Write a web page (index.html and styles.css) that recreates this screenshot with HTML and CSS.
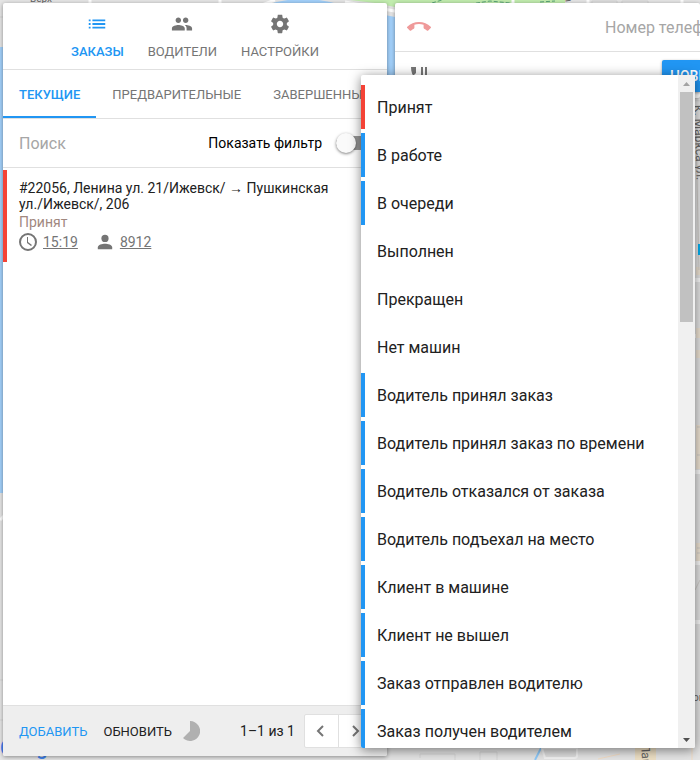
FILE: index.html
```html
<!DOCTYPE html>
<html lang="ru">
<head>
  <meta charset="UTF-8" />
  <meta name="viewport" content="width=device-width, initial-scale=1.0"/>
  <title>Заказы</title>
  <link rel="stylesheet" href="styles.css">
</head>
<body>
  <!-- Map -->
  <svg class="map" viewBox="0 0 700 760" preserveAspectRatio="xMinYMin slice" aria-hidden="true">
    <rect width="700" height="760" fill="#e5e5e5"/>
    <path d="M0 47H10V493H0z" fill="#a3d1fb"/>
    <path d="M262 6Q303-8 345 6z" fill="#a3d1fb"/>
    <path d="M350 0H565V3H535L500 8H395V7L375 3z" fill="#c1ecae"/>
    <path d="M380 14L400 18V110H380z" fill="#a3d1fb"/>
    <path d="M432 3L442 0M470 4L490 1 510 3M540 2L555 1" fill="none" stroke="#5aa578" stroke-dasharray="4 2"/>
    <path d="M90 0V5M220 0V5M262 5L275 0M345 2L400 12M513 0V6M588 0V6M682 0V5M0 520L6 514" fill="none" stroke="#fff" stroke-width="3"/>
    <path d="M592 5V1H617V5M622 5V1H648V5M0 17H5" fill="none" stroke="#d3d3d3"/>
    <path d="M690 98H700M690 280H700M690 336H700M690 472H700M690 563H700M690 622H700" stroke="#fafafa" stroke-width="4"/>
    <path d="M696 275h6v-8h-6zM696 328h6v10h-6zM696 350h6v8h-6zM696 425h6v44h-6zM696 543h6v18h-6z" fill="#efe4d4"/>
    <path d="M696 130L699 270M697 427H700M697 455H700M697 548H700M697 553H700M695 590L700 580" stroke="#d0cdc9"/>
    <path d="M698 244h3v11h-3z" fill="#00aeef"/>
    <path d="M420 758V754H455V760M480 760V752H497V760M0 680H3M0 720H3" fill="none" stroke="#d5d5d5"/>
    <path d="M535 760L541 748" stroke="#8fcafa" stroke-width="2"/>
    <path d="M542 748H577V756Q577 758 574 758H545z" fill="#dedede" stroke="#f2f2f2" stroke-width="2"/>
    <path d="M635 740H656V760H635z" fill="#eee0c5"/>
    <path d="M598 759L620 754M692 745V760" fill="none" stroke="#f3ddc5"/>
    <text class="map-label" x="30" y="2">Верх</text>
    <text class="map-label" transform="translate(564 -8) rotate(82)">ул.</text>
    <text class="map-label street" transform="translate(694 105) rotate(88)">К. Маркса ул.</text>
    <text class="map-label street" transform="translate(641 744) rotate(86)">Пан</text>
    <text class="map-label" x="693" y="701">ой</text>
    <text class="map-logo" x="0" y="755"><tspan fill="#4285f4">G</tspan><tspan fill="#ea4335">o</tspan><tspan fill="#fbbc05">o</tspan><tspan fill="#4285f4">g</tspan><tspan fill="#34a853">l</tspan><tspan fill="#ea4335">e</tspan></text>
  </svg>

  <div class="workspace">
    <section class="panel orders">
      <nav class="main-nav">
        <a href="#orders" class="nav-item active">
          <svg class="icon" viewBox="0 0 24 24"><path d="M3 13h2v-2H3v2zm0 4h2v-2H3v2zm0-8h2V7H3v2zm4 4h14v-2H7v2zm0 4h14v-2H7v2zM7 7v2h14V7H7z"/></svg>
          <span>ЗАКАЗЫ</span>
        </a>
        <a href="#drivers" class="nav-item">
          <svg class="icon" viewBox="0 0 24 24"><path d="M16 11c1.66 0 2.99-1.34 2.99-3S17.66 5 16 5s-3 1.34-3 3 1.34 3 3 3zm-8 0c1.66 0 2.99-1.34 2.99-3S9.66 5 8 5 5 6.34 5 8s1.34 3 3 3zm0 2c-2.33 0-7 1.17-7 3.5V19h14v-2.5c0-2.33-4.67-3.5-7-3.5zm8 0c-.29 0-.62.02-.97.05 1.16.84 1.97 1.97 1.97 3.45V19h6v-2.5c0-2.33-4.67-3.5-7-3.5z"/></svg>
          <span>ВОДИТЕЛИ</span>
        </a>
        <a href="#settings" class="nav-item">
          <svg class="icon" viewBox="0 0 24 24"><path d="M19.43 12.98c.04-.32.07-.64.07-.98s-.03-.66-.07-.98l2.11-1.65c.19-.15.24-.42.12-.64l-2-3.46c-.12-.22-.39-.3-.61-.22l-2.49 1c-.52-.4-1.08-.73-1.69-.98l-.38-2.65C14.46 2.18 14.25 2 14 2h-4c-.25 0-.46.18-.49.42l-.38 2.65c-.61.25-1.17.59-1.69.98l-2.49-1c-.23-.09-.49 0-.61.22l-2 3.46c-.13.22-.07.49.12.64l2.11 1.65c-.04.32-.07.65-.07.98s.03.66.07.98l-2.11 1.65c-.19.15-.24.42-.12.64l2 3.46c.12.22.39.3.61.22l2.49-1c.52.4 1.08.73 1.69.98l.38 2.65c.03.24.24.42.49.42h4c.25 0 .46-.18.49-.42l.38-2.65c.61-.25 1.17-.59 1.69-.98l2.49 1c.23.09.49 0 .61-.22l2-3.46c.12-.22.07-.49-.12-.64l-2.11-1.65zM12 15.5c-1.93 0-3.5-1.57-3.5-3.5s1.57-3.5 3.5-3.5 3.5 1.57 3.5 3.5-1.57 3.5-3.5 3.5z"/></svg>
          <span>НАСТРОЙКИ</span>
        </a>
      </nav>

      <div class="tabs" role="tablist">
        <button class="tab active" role="tab" aria-selected="true">ТЕКУЩИЕ</button>
        <button class="tab" role="tab">ПРЕДВАРИТЕЛЬНЫЕ</button>
        <button class="tab" role="tab">ЗАВЕРШЕННЫЕ</button>
      </div>

      <div class="search-row">
        <input type="text" class="search" placeholder="Поиск" aria-label="Поиск">
        <label class="filter" for="showFilter">Показать фильтр</label>
        <input type="checkbox" id="showFilter" class="switch">
      </div>

      <div class="order-list">
        <article class="order">
          <div class="order-title">#22056, Ленина ул. 21/Ижевск/ → Пушкинская ул./Ижевск/, 206</div>
          <div class="order-status">Принят</div>
          <div class="order-meta">
            <svg class="icon-small" viewBox="0 0 20 20"><circle cx="9" cy="10" r="8" fill="none" stroke="#757575" stroke-width="2"/><path d="M8 5h1v5l4 3-1 1-4-3z"/></svg>
            <a href="#time">15:19</a>
            <svg class="icon-small person" viewBox="0 0 20 20"><circle cx="10" cy="6" r="4"/><path d="M2 18v-2c0-3 5-4 8-4s8 1 8 4v2z"/></svg>
            <a href="#driver">8912</a>
          </div>
        </article>
      </div>

      <footer class="footer">
        <button class="text-btn primary">ДОБАВИТЬ</button>
        <button class="text-btn">ОБНОВИТЬ</button>
        <svg class="timer" viewBox="0 0 20 20"><path d="M10 0A10 10 0 1 1 3 17L10 10z"/></svg>
        <span class="range">1–1 из 1</span>
        <div class="pager">
          <button aria-label="Назад"><svg viewBox="0 0 24 24"><path d="M14 7l-5 5 5 5"/></svg></button>
          <button aria-label="Вперёд"><svg viewBox="0 0 24 24"><path d="M10 7l5 5-5 5"/></svg></button>
        </div>
      </footer>
    </section>

    <section class="panel call">
      <div class="call-row">
        <button class="hangup" aria-label="Завершить звонок">
          <svg viewBox="0 0 24 24"><path d="M12 9c-1.600 0-3.150.25-4.600.72v3.100c0 .390-.230.740-.560.900-.980.490-1.870 1.120-2.660 1.850-.180.180-.430.280-.700.280-.280 0-.530-.110-.710-.290L.290 13.080c-.180-.170-.290-.420-.290-.700 0-.280.110-.530.290-.710C3.340 8.780 7.460 7 12 7s8.660 1.780 11.710 4.670c.180.180.290.430.290.710 0 .280-.110.530-.290.710l-2.480 2.480c-.180.180-.430.290-.710.290-.270 0-.520-.110-.700-.280-.790-.740-1.690-1.360-2.670-1.850-.330-.160-.560-.500-.560-.900v-3.100C15.150 9.250 13.600 9 12 9z"/></svg>
        </button>
        <input type="tel" class="phone" placeholder="Номер телефона" aria-label="Номер телефона">
      </div>
      <div class="call-actions">
        <svg class="hold" viewBox="0 0 20 20"><path d="M2 1h5v6l-2 2c1 2 3 4 6 5l2-2 5 1v4C9 18 2 11 2 1zM12 1h2v8h-2zM16 1h2v8h-2z"/></svg>
        <button class="new-btn">НОВЫЙ</button>
      </div>
    </section>
  </div>

  <!-- Status menu -->
  <div class="menu">
    <div class="menu-items" role="listbox" aria-label="Статус">
      <button role="option" class="red">Принят</button>
      <button role="option" class="blue">В работе</button>
      <button role="option" class="blue">В очереди</button>
      <button role="option">Выполнен</button>
      <button role="option">Прекращен</button>
      <button role="option">Нет машин</button>
      <button role="option" class="blue">Водитель принял заказ</button>
      <button role="option" class="blue">Водитель принял заказ по времени</button>
      <button role="option" class="blue">Водитель отказался от заказа</button>
      <button role="option" class="blue">Водитель подъехал на место</button>
      <button role="option" class="blue">Клиент в машине</button>
      <button role="option" class="blue">Клиент не вышел</button>
      <button role="option" class="blue">Заказ отправлен водителю</button>
      <button role="option" class="blue">Заказ получен водителем</button>
    </div>
    <div class="scrollbar" aria-hidden="true">
      <svg viewBox="0 0 17 17"><path d="M5 11h7L8.500 7z" fill="#a3a3a3"/></svg>
      <div class="track"><div class="thumb"></div></div>
      <svg viewBox="0 0 17 17"><path d="M5 7h7l-3.500 4z" fill="#505050"/></svg>
    </div>
  </div>
</body>
</html>
```

FILE: styles.css
```css
* {
  box-sizing: border-box;
}

body {
  margin: 0;
  height: 100vh;
  overflow: hidden;
  position: relative;
  font-family: Roboto, "Noto Sans", sans-serif;
  font-size: 14px;
  color: #212121;
  background: #e5e5e5;
}

button,
input {
  font: inherit;
  color: inherit;
  background: none;
  border: 0;
  padding: 0;
  margin: 0;
  outline: none;
}

button {
  cursor: pointer;
}

.map {
  position: absolute;
  top: 0;
  left: 0;
  width: 100%;
  height: 100%;
}

.map-label {
  font-size: 10px;
  fill: #666;
}

.map-label.street {
  font-size: 12px;
}

.map-logo {
  font-size: 20px;
  font-weight: 500;
}

.workspace {
  position: relative;
  display: flex;
  align-items: flex-start;
  gap: 8px;
  height: 100%;
  padding: 3px 0 4px 3px;
}

.panel {
  background: #fff;
  border-radius: 2px;
  box-shadow: 0 1px 4px rgba(0, 0, 0, 0.4);
}

/* Orders panel */
.orders {
  display: flex;
  flex-direction: column;
  flex-shrink: 0;
  width: 384px;
  height: 100%;
  overflow: hidden;
}

.main-nav {
  display: flex;
  justify-content: center;
  height: 67px;
  border-bottom: 1px solid #e0e0e0;
}

.nav-item {
  display: flex;
  flex-direction: column;
  align-items: center;
  gap: 9px;
  padding: 10px 12px 0;
  color: #757575;
  font-size: 13px;
  line-height: 16px;
  text-decoration: none;
}

.nav-item.active {
  color: #2196f3;
  font-weight: 500;
}

.icon {
  width: 22px;
  height: 22px;
  fill: currentColor;
}

.tabs {
  display: flex;
  height: 49px;
  overflow: hidden;
  border-bottom: 1px solid #e0e0e0;
}

.tab {
  flex-shrink: 0;
  padding: 2px 16px 0;
  color: #757575;
  font-size: 13px;
  border-bottom: 2px solid transparent;
}

.tab.active {
  color: #2196f3;
  font-weight: 500;
  border-color: #2196f3;
}

.search-row {
  display: flex;
  align-items: center;
  height: 49px;
  padding: 0 15px 0 16px;
  border-bottom: 1px solid #e0e0e0;
}

.search {
  flex: 1;
  min-width: 0;
  font-size: 16px;
}

.search::placeholder,
.phone::placeholder {
  color: #a6a6a6;
  opacity: 1;
}

.filter {
  color: #000;
}

.switch {
  appearance: none;
  display: flex;
  align-items: center;
  width: 36px;
  height: 14px;
  margin-left: 14px;
  border-radius: 7px;
  background: #999;
}

.switch::before {
  content: '';
  width: 20px;
  height: 20px;
  flex-shrink: 0;
  border-radius: 50%;
  background: #fafafa;
  box-shadow: 0 1px 3px rgba(0, 0, 0, 0.5);
}

.order-list {
  flex: 1;
  padding-top: 2px;
}

.order {
  min-height: 92px;
  padding: 10px 16px 10px 12px;
  border-left: 4px solid #f44336;
  line-height: 16px;
}

.order-title {
  max-width: 330px;
}

.order-status {
  color: #a1887f;
  line-height: 20px;
}

.order-meta {
  display: flex;
  align-items: center;
  line-height: 20px;
}

.order-meta a {
  color: #757575;
  margin-left: 4px;
}

.icon-small {
  width: 20px;
  height: 20px;
  fill: #757575;
}

.person {
  width: 18px;
  height: 18px;
  margin-left: 18px;
}

.order-meta .person + a {
  margin-left: 6px;
}

.footer {
  display: flex;
  align-items: center;
  height: 51px;
  padding-left: 16px;
  background: #eee;
  border-top: 1px solid #e0e0e0;
}

.text-btn {
  margin-right: 16px;
  font-size: 13px;
}

.text-btn.primary {
  color: #2196f3;
}

.timer {
  width: 20px;
  height: 20px;
  margin-left: -8px;
  fill: #b0b0b0;
}

.range {
  flex: 1;
  text-align: right;
  margin-right: 9px;
}

.pager {
  display: flex;
  width: 68px;
  height: 34px;
  margin-right: 15px;
  background: #fff;
  border: 1px solid #e0e0e0;
  border-radius: 2px;
}

.pager button {
  display: flex;
  align-items: center;
  justify-content: center;
  flex: 1;
}

.pager button + button {
  border-left: 1px solid #e0e0e0;
}

.pager svg {
  width: 24px;
  height: 24px;
  fill: none;
  stroke: #757575;
  stroke-width: 2;
}

/* Call panel */
.call {
  flex: 1;
  min-width: 0;
  overflow: hidden;
}

.call-row {
  display: flex;
  align-items: center;
  height: 49px;
  padding-left: 12px;
  border-bottom: 1px solid #e0e0e0;
}

.hangup {
  width: 24px;
  height: 24px;
}

.hangup svg {
  display: block;
  fill: #ef9a9a;
}

.phone {
  flex: 1;
  min-width: 0;
  margin-left: 174px;
  font-size: 16px;
}

.call-actions {
  display: flex;
  align-items: flex-start;
  justify-content: space-between;
  height: 46px;
  padding: 8px 0 8px 12px;
}

.hold {
  width: 20px;
  height: 20px;
  margin: 6px 2px;
  fill: #757575;
}

.new-btn {
  width: 38px;
  height: 32px;
  padding-left: 8px;
  overflow: hidden;
  text-align: left;
  color: #fff;
  font-weight: 500;
  background: #2196f3;
  border-radius: 2px 0 0 2px;
  box-shadow: 0 1px 3px rgba(0, 0, 0, 0.4);
}

/* Status menu, lies over both panels */
.menu {
  position: absolute;
  top: 75px;
  right: 5px;
  bottom: 12px;
  left: 361px;
  display: flex;
  background: #fff;
  border-radius: 2px;
  overflow: hidden;
  box-shadow: 0 2px 12px rgba(0, 0, 0, 0.5);
}

.menu-items {
  flex: 1;
  padding: 8px 0;
}

.menu-items button {
  display: block;
  width: 100%;
  height: 44px;
  margin: 2px 0 4px;
  padding-left: 12px;
  font-size: 16px;
  text-align: left;
  border-left: 4px solid transparent;
}

.menu-items .red {
  border-color: #f44336;
}

.menu-items .blue {
  border-color: #2196f3;
}

.scrollbar {
  display: flex;
  flex-direction: column;
  width: 17px;
  background: #f0f0f0;
}

.scrollbar svg {
  width: 17px;
  height: 17px;
}

.track {
  flex: 1;
  padding: 0 2px;
}

.thumb {
  height: 36%;
  background: #c1c1c1;
}
```
